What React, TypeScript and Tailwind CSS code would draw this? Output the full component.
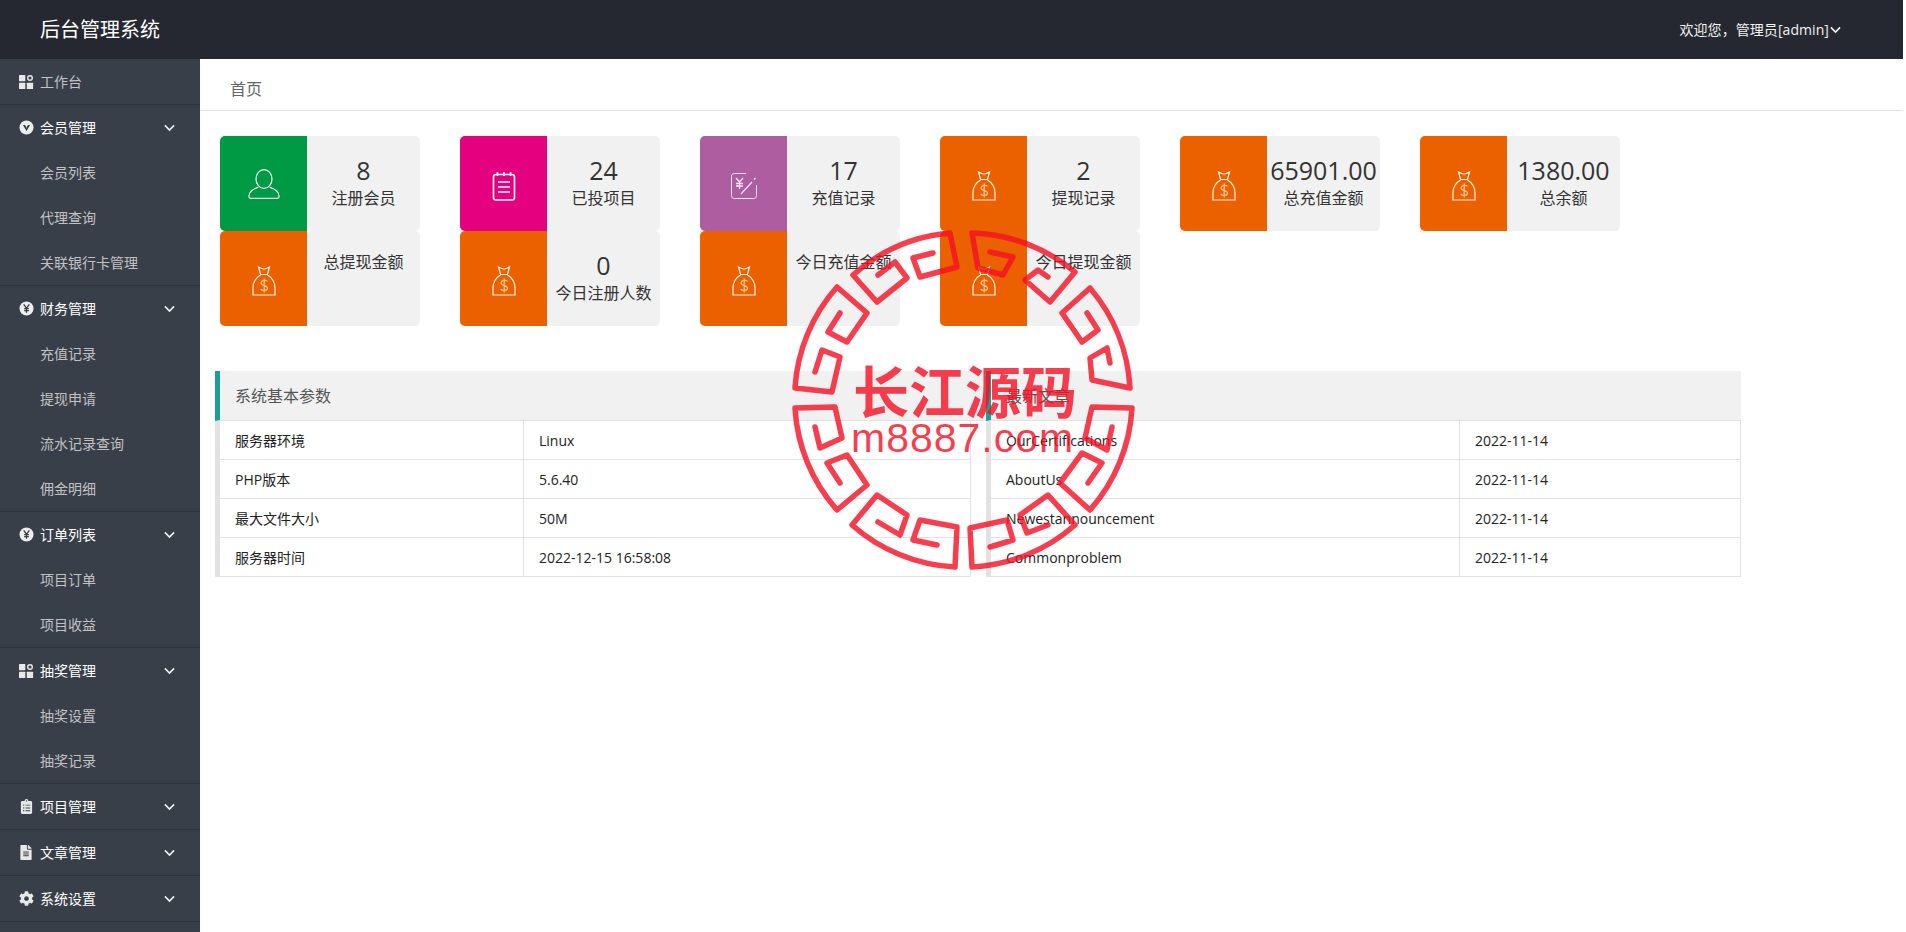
import React from "react";
import { FaCog, FaFileAlt, FaClipboardList } from "react-icons/fa";

const Chevron = ({ className = "" }: { className?: string }) => (
  <svg viewBox="0 0 12 8" className={className} fill="none" stroke="currentColor" strokeWidth="1.8">
    <path d="M1 1.2 L6 6.2 L11 1.2" />
  </svg>
);

const GridIcon = () => (
  <svg viewBox="0 0 16 16" className="w-[16px] h-[16px]" fill="#e8e8e8">
    <rect x="1" y="1" width="6.3" height="6.3" rx="0.6" />
    <rect x="1" y="8.7" width="6.3" height="6.3" rx="0.6" />
    <rect x="8.8" y="8.7" width="6.3" height="6.3" rx="0.6" />
    <circle cx="12" cy="4" r="2.3" fill="none" stroke="#e8e8e8" strokeWidth="1.4" />
  </svg>
);

const VIcon = () => (
  <svg viewBox="0 0 16 16" className="w-[15px] h-[15px]">
    <circle cx="8" cy="8" r="7.5" fill="#eeeeee" />
    <path d="M4.2 5.2 H6.6 L8 8.2 L9.4 5.2 H11.8 L8 11.8 Z" fill="#393f49" />
    <path d="M6.9 5.2 H9.1 L8 7.2 Z" fill="#eeeeee" />
  </svg>
);

const YenIcon = () => (
  <svg viewBox="0 0 16 16" className="w-[15px] h-[15px]">
    <circle cx="8" cy="8" r="7.5" fill="#eeeeee" />
    <path d="M5 3.5 L8 7.5 L11 3.5 M8 7.5 V12.5 M5.5 8.2 H10.5 M5.5 10.2 H10.5" fill="none" stroke="#393f49" strokeWidth="1.4" />
  </svg>
);

type NavGroup = { label: string; icon: React.ReactNode; items?: string[]; chevron?: boolean };

const groups: NavGroup[] = [
  { label: "工作台", icon: <GridIcon /> },
  { label: "会员管理", icon: <VIcon />, chevron: true, items: ["会员列表", "代理查询", "关联银行卡管理"] },
  { label: "财务管理", icon: <YenIcon />, chevron: true, items: ["充值记录", "提现申请", "流水记录查询", "佣金明细"] },
  { label: "订单列表", icon: <YenIcon />, chevron: true, items: ["项目订单", "项目收益"] },
  { label: "抽奖管理", icon: <GridIcon />, chevron: true, items: ["抽奖设置", "抽奖记录"] },
  { label: "项目管理", icon: <FaClipboardList className="w-[13px] h-[15px] text-[#e8e8e8]" />, chevron: true },
  { label: "文章管理", icon: <FaFileAlt className="w-[12px] h-[15px] text-[#e8e8e8]" />, chevron: true },
  { label: "系统设置", icon: <FaCog className="w-[15px] h-[15px] text-[#e8e8e8]" />, chevron: true },
];

const UserIcon = () => (
  <svg viewBox="0 0 32 30" className="w-[32px] h-[30px] -mt-[4px]" fill="none" stroke="#e6f5ec" strokeWidth="1.3">
    <ellipse cx="16" cy="10" rx="8" ry="9.4" />
    <path d="M10.5 18 C6 20 1 21.5 1 27.5 C1 28.8 1.6 29.3 2.5 29.3 H29.5 C30.4 29.3 31 28.8 31 27.5 C31 21.5 26 20 21.5 18" />
  </svg>
);

const NoteIcon = () => (
  <svg viewBox="0 0 24 30" className="w-[24px] h-[30px]" fill="none" stroke="#ffffff" strokeWidth="1.6">
    <rect x="1.5" y="3.5" width="21" height="25.5" rx="2.5" />
    <path d="M5.5 1 V5 M12 1 V5 M18.5 1 V5" />
    <path d="M6 11 H18 M6 16 H18 M6 21 H18" />
  </svg>
);

const RechargeIcon = () => (
  <svg viewBox="0 0 28 28" className="w-[28px] h-[28px]" fill="none" stroke="#f4e6f2" strokeWidth="1">
    <path d="M16 1.5 H4.5 C2.5 1.5 1.5 2.5 1.5 4.5 V23.5 C1.5 25.5 2.5 26.5 4.5 26.5 H23.5 C25.5 26.5 26.5 25.5 26.5 23.5 V13" />
    <path d="M6 6 L9.5 10 L13 6 M9.5 10 V17 M6 11.5 H13 M6 14 H13" strokeWidth="1.3" />
    <path d="M11 22 L22 10 M24 7.5 L25.5 6" strokeWidth="1.2" />
  </svg>
);

const BagIcon = () => (
  <svg viewBox="0 0 24 30" className="w-[24px] h-[30px]" fill="none" stroke="#fff4e8" strokeWidth="1.2">
    <path d="M6.5 1 L11 3 L13 3 L17.5 1 L15.5 8.5 H8.5 Z" />
    <path d="M8.5 9 C3.5 12 1 17 1 22 V29 H23 V22 C23 17 20.5 12 15.5 9" />
    <path d="M15.5 15.5 C14.5 14 9 13.8 9 17 C9 20.3 15.5 19 15.5 22.3 C15.5 25 10 25 8.7 23.2 M12.2 12.5 V26.5" stroke="#ffc999" />
  </svg>
);

type Stat = { value?: string; label: string; color: string; icon: React.ReactNode };

const stats: Stat[] = [
  { value: "8", label: "注册会员", color: "bg-[#009944]", icon: <UserIcon /> },
  { value: "24", label: "已投项目", color: "bg-[#e4007f]", icon: <NoteIcon /> },
  { value: "17", label: "充值记录", color: "bg-[#ae5da1]", icon: <RechargeIcon /> },
  { value: "2", label: "提现记录", color: "bg-[#eb6100]", icon: <BagIcon /> },
  { value: "65901.00", label: "总充值金额", color: "bg-[#eb6100]", icon: <BagIcon /> },
  { value: "1380.00", label: "总余额", color: "bg-[#eb6100]", icon: <BagIcon /> },
  { label: "总提现金额", color: "bg-[#eb6100]", icon: <BagIcon /> },
  { value: "0", label: "今日注册人数", color: "bg-[#eb6100]", icon: <BagIcon /> },
  { label: "今日充值金额", color: "bg-[#eb6100]", icon: <BagIcon /> },
  { label: "今日提现金额", color: "bg-[#eb6100]", icon: <BagIcon /> },
];

const StatCard = ({ s }: { s: Stat }) => (
  <div className="flex h-[95px] w-[200px] rounded-[5px] overflow-hidden bg-[#f1f1f1]">
    <div className={`w-[87px] shrink-0 flex items-center justify-center pt-[5px] ${s.color}`}>{s.icon}</div>
    <div className="flex-1 text-center text-[#333333]">
      {s.value ? (
        <div className="pt-[17px]">
          <div className="text-[25px] leading-[34px] -mx-[6px]">{s.value}</div>
          <div className="text-[16px] leading-[22px]">{s.label}</div>
        </div>
      ) : (
        <div className="pt-[20px] text-[16px] leading-[22px]">{s.label}</div>
      )}
    </div>
  </div>
);

const Panel = ({
  title,
  rows,
  panelWidth,
  tableWidth,
  col1,
}: {
  title: string;
  rows: [string, string][];
  panelWidth: string;
  tableWidth: string;
  col1: string;
}) => (
  <div className={panelWidth}>
    <div className="h-[50px] flex items-center bg-[#f1f1f1] border-l-[5px] border-b border-l-[#1aa094] border-b-[#e2e2e2] pl-[15px] text-[16px] text-[#555555]">
      {title}
    </div>
    <div className={`border-l-[5px] border-[#e2e2e2] ${tableWidth}`}>
      {rows.map(([a, b]) => (
        <div key={a} className="flex h-[39px] border-b border-r border-[#e2e2e2] text-[14px] text-[#222222]">
          <div className={`${col1} shrink-0 border-r border-[#e2e2e2] pl-[15px] flex items-center`}>{a}</div>
          <div className="flex-1 pl-[15px] flex items-center">{b}</div>
        </div>
      ))}
    </div>
  </div>
);

const sealPath = [
  "M207 33 L230 38 L220 56 L195 49 L189 14 A168 168 0 0 1 292 53 L267 83 L242 61 L255 51 L265 58",
  "M304 94 L315 111 L299 123 L279 94 L307 69 A168 168 0 0 1 347 169 L309 161 L307 139 L324 129 L327 144",
  "M150 34 L130 39 L137 58 L174 48 L167 14 A168 168 0 0 0 70 56 L94 83 L124 59 L112 43 L95 56",
  "M57 94 L45 113 L64 123 L84 94 L54 68 A168 168 0 0 0 12 169 L49 173 L57 138 L39 131 L32 153",
  "M32 208 L37 229 L59 219 L52 188 L12 189 A168 168 0 0 0 54 291 L84 266 L64 236 L44 244 L57 264",
  "M95 303 L117 316 L124 296 L94 276 L69 306 A168 168 0 0 0 172 348 L174 308 L137 301 L130 321 L154 326",
  "M329 208 L324 231 L302 219 L309 188 L349 189 A168 168 0 0 1 307 291 L277 264 L299 234 L319 244 L305 264",
  "M265 306 L244 314 L237 296 L265 276 L292 306 A168 168 0 0 1 189 348 L187 309 L224 301 L230 321 L207 328",
].join(" ");

const Seal = () => (
  <div className="absolute left-[783px] top-[219px] w-[360px] h-[360px] opacity-80 pointer-events-none">
    <svg viewBox="0 0 360 360" className="absolute inset-0 w-full h-full" fill="none" stroke="#f60f24" strokeWidth="5.5" strokeLinejoin="round" strokeLinecap="round">
      <path d={sealPath} />
    </svg>
    <div className="absolute left-[70px] top-[136px] w-[224px] text-center text-[56px] leading-[68px] font-bold text-[#f60f24] font-['Noto_Sans_CJK_SC',sans-serif] whitespace-nowrap">
      长江源码
    </div>
    <div className="absolute left-[68px] top-[196px] text-[41px] leading-[46px] tracking-[1px] text-[#f60f24] font-['Liberation_Sans',sans-serif] whitespace-nowrap">
      m8887.com
    </div>
  </div>
);

export default function App() {
  return (
    <div className="relative w-[1906px] h-[932px] overflow-hidden bg-white font-['Open_Sans','Noto_Sans_CJK_SC',sans-serif]">
      <div className="w-[1903px] h-full flex flex-col">
        <header className="h-[59px] shrink-0 bg-[#252830] flex items-center justify-between text-white">
          <div className="pl-[40px] text-[20px]">后台管理系统</div>
          <div className="flex items-center pr-[62px] text-[14px] text-[#f2f2f2]">
            <span className="tracking-[0.07px]">欢迎您，管理员[admin]</span>
            <Chevron className="w-[11px] h-[8px] ml-[1px] mt-[1px]" />
          </div>
        </header>
        <div className="flex flex-1 min-h-0">
          <aside className="w-[200px] shrink-0 bg-[#393f49] text-[14px]">
            {groups.map((g, i) => (
              <div key={g.label} className="border-b border-[#2f343d]">
                <div className={`h-[45px] flex items-center relative pl-[40px] ${i === 0 ? "text-[#c2c2c2]" : "text-white"}`}>
                  <span className="absolute left-[18px] top-0 h-full w-[16px] flex items-center justify-center">{g.icon}</span>
                  <span>{g.label}</span>
                  {g.chevron && <Chevron className="absolute left-[164px] top-[19px] w-[11px] h-[8px] text-[#eeeeee]" />}
                </div>
                {g.items?.map((it) => (
                  <div key={it} className="h-[45px] flex items-center pl-[40px] text-[#c2c2c2]">
                    {it}
                  </div>
                ))}
              </div>
            ))}
          </aside>
          <main className="flex-1 min-w-0">
            <div className="h-[52px] border-b border-[#e2e2e2] pl-[30px] flex items-center text-[16px] text-[#666666] pt-[8px]">首页</div>
            <div className="pl-[20px] pt-[25px]">
              <div className="grid grid-cols-[repeat(6,200px)] gap-x-[40px] w-fit">
                {stats.map((s) => (
                  <StatCard key={s.label} s={s} />
                ))}
              </div>
            </div>
            <div className="flex pl-[15px] mt-[45px]">
              <Panel
                title="系统基本参数"
                panelWidth="w-[771px]"
                tableWidth="w-[756px]"
                col1="w-[304px]"
                rows={[
                  ["服务器环境", "Linux"],
                  ["PHP版本", "5.6.40"],
                  ["最大文件大小", "50M"],
                  ["服务器时间", "2022-12-15 16:58:08"],
                ]}
              />
              <Panel
                title="最新文章"
                panelWidth="w-[755px]"
                tableWidth="w-[755px]"
                col1="w-[469px]"
                rows={[
                  ["OurCertifications", "2022-11-14"],
                  ["AboutUs", "2022-11-14"],
                  ["Newestannouncement", "2022-11-14"],
                  ["Commonproblem", "2022-11-14"],
                ]}
              />
            </div>
          </main>
        </div>
      </div>
      <Seal />
    </div>
  );
}
